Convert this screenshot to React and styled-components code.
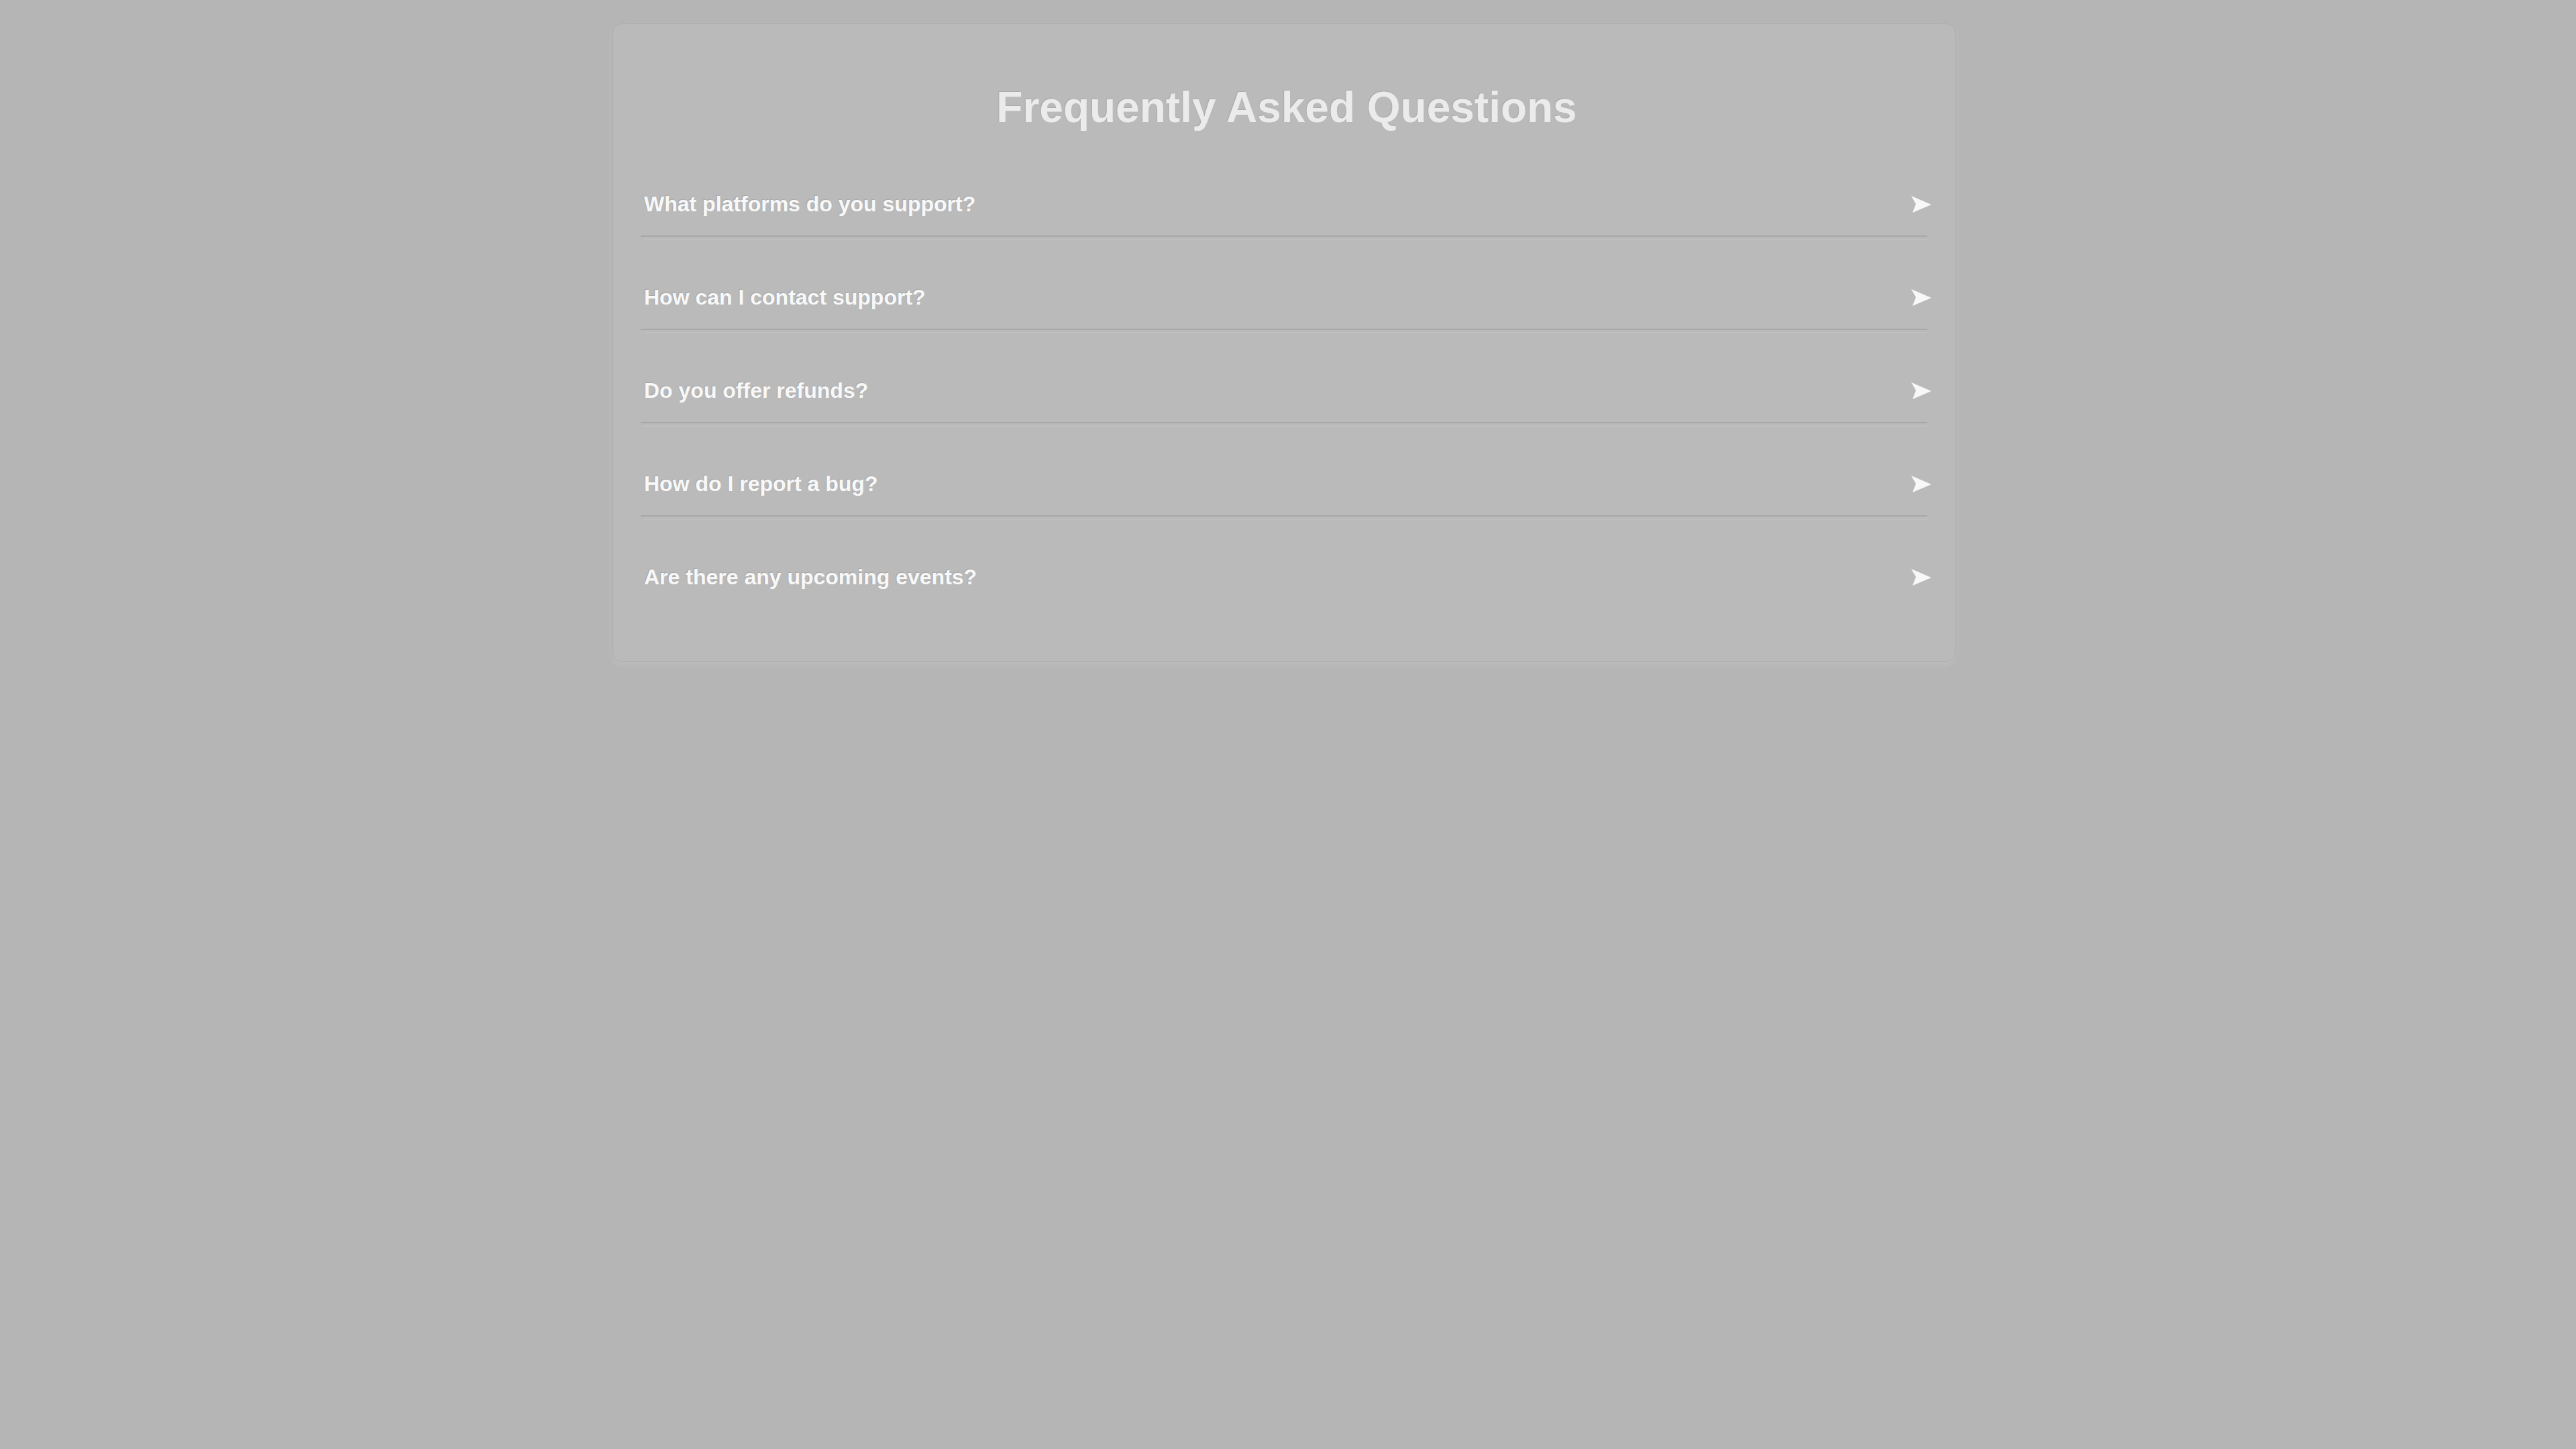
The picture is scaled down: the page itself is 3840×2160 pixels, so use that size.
import React from "react";
import styled, { createGlobalStyle } from "styled-components";

const questions = [
    "What platforms do you support?",
    "How can I contact support?",
    "Do you offer refunds?",
    "How do I report a bug?",
    "Are there any upcoming events?",
];

const Arrow = () => (
    <ArrowIcon viewBox="0 0 30 25" aria-hidden="true">
        <polygon points="0,0 30,13 2,25 7,12" />
    </ArrowIcon>
);

const App = () => {
    return (
        <>
            <GlobalStyle />
            <Page>
                <Card>
                    <Title>Frequently Asked Questions</Title>
                    <List>
                        {questions.map((q, i) => (
                            <Item key={q} last={i === questions.length - 1}>
                                <Question>
                                    <span>{q}</span>
                                    <Arrow />
                                </Question>
                            </Item>
                        ))}
                    </List>
                </Card>
            </Page>
        </>
    );
}

export default App;


const GlobalStyle = createGlobalStyle`
    html, body {
        margin:0;
        padding:0;
        background:#b5b5b5;
        font-family:"Liberation Sans", Arial, sans-serif;
    }
    #root {
        min-height:2160px;
    }
`

const Page = styled.div`
    padding-top:35px;
    padding-left:913px;
`

const Card = styled.div`
    box-sizing:border-box;
    width:2002px;
    padding:40px 41px 55px;
    background:#bababa;
    border:1px solid #acacac;
    border-radius:14px;
    box-shadow:0 5px 10px rgba(190,190,190,0.9);
`

const Title = styled.h1`
    margin:47px 0 39px;
    padding-left:8px;
    text-align:center;
    font-size:64px;
    font-weight:700;
    line-height:74px;
    color:#ebebeb;
    text-shadow:-1px -1px 1px rgba(120,120,120,0.25);
`

const List = styled.div`
    display:flex;
    flex-direction:column;
`

const Item = styled.div`
    position:relative;
    margin:22px 0;
    border-bottom:2px solid ${props => props.last ? "transparent" : "#a8a8a8"};

    &::after {
        content:"";
        display:${props => props.last ? "none" : "block"};
        position:absolute;
        left:5px;
        right:0;
        bottom:-7px;
        height:2px;
        background:#bfbfbf;
    }
`

const Question = styled.div`
    display:flex;
    align-items:center;
    justify-content:space-between;
    padding:28px 0 28px 5px;
    font-size:32px;
    font-weight:700;
    line-height:37px;
    color:#f8f8f8;
    text-shadow:-1px -1px 1px rgba(110,110,110,0.25);
`

const ArrowIcon = styled.svg`
    width:30px;
    height:25px;
    margin-right:-6px;
    fill:#f8f8f8;
`
